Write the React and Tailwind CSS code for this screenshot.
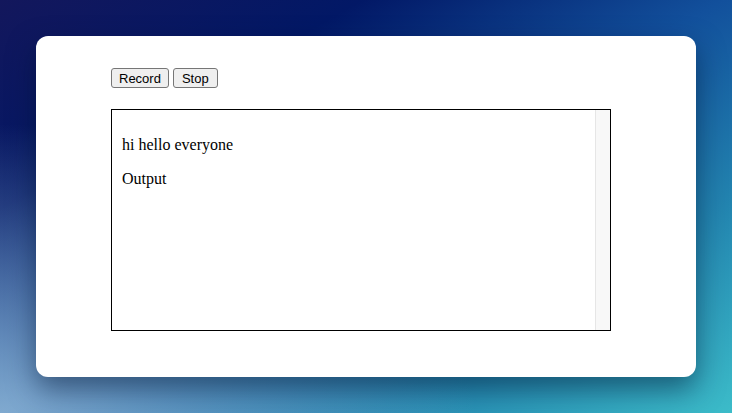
import React from "react"

// 녹음 화면 (Record / Stop + 출력 박스)
const App = () => {
  const lines = ["hi hello everyone", "Output"]

  return (
    <div className="h-[413px] w-full flex items-center justify-center bg-[radial-gradient(ellipse_65%_70%_at_0%_100%,rgba(165,200,225,0.75),rgba(165,200,225,0)_100%),linear-gradient(150deg,#13175c_0%,#021866_25%,#12509c_50%,#2385b0_75%,#3cbcc9_100%)]">
      <div className="w-[660px] h-[341px] bg-white rounded-[12px] shadow-[0_12px_28px_rgba(0,20,50,0.5)] pt-[32px] pl-[75px]">
        <div className="flex gap-[4px] font-['Liberation_Sans',Arial,sans-serif] text-[13px] text-black">
          <button
            type="button"
            className="h-[20px] px-[7px] bg-[#efefef] border border-[#767676] rounded-[3px] leading-none"
          >
            Record
          </button>
          <button
            type="button"
            className="h-[20px] px-[8px] bg-[#efefef] border border-[#767676] rounded-[3px] leading-none"
          >
            Stop
          </button>
        </div>

        {/* 출력 박스 */}
        <div className="mt-[21px] w-[500px] h-[222px] border border-black flex">
          <div className="flex-1 px-[10px] pt-[10px] font-['Liberation_Serif','Times_New_Roman',serif] text-[16px] text-black">
            {lines.map((line) => (
              <p key={line} className="my-[16px] leading-[18px]">
                {line}
              </p>
            ))}
          </div>
          <div className="w-[15px] bg-[#f8f8f8] border-l border-[#e6e6e6]" />
        </div>
      </div>
    </div>
  )
}

export default App
